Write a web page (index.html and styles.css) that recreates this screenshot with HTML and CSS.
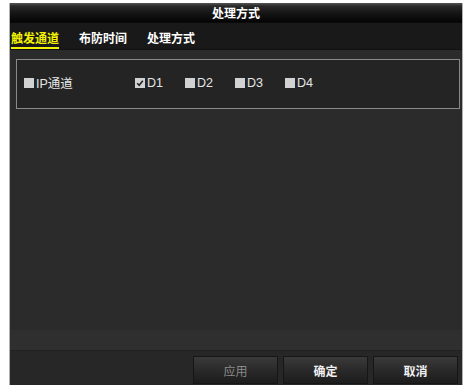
FILE: index.html
```html
<!DOCTYPE html>
<html>
<head>
<meta charset="utf-8">
<link rel="stylesheet" href="styles.css">
</head>
<body>
<div class="window">
  <div class="titlebar">处理方式</div>
  <div class="tabs">
    <div class="tab active">触发通道</div>
    <div class="tab">布防时间</div>
    <div class="tab">处理方式</div>
  </div>
  <div class="content">
    <div class="group">
      <label class="chk ip"><span class="box"></span>IP通道</label>
      <label class="chk d1"><span class="box checked"><svg viewBox="0 0 10 10" width="10" height="10"><path d="M2.2 5.2 L4.2 7.2 L7.8 2.8" fill="none" stroke="#222" stroke-width="1.6"/></svg></span>D1</label>
      <label class="chk"><span class="box"></span>D2</label>
      <label class="chk"><span class="box"></span>D3</label>
      <label class="chk"><span class="box"></span>D4</label>
    </div>
    <div class="spacer"></div>
    <div class="lower"></div>
  </div>
  <div class="buttons">
    <div class="btn disabled">应用</div>
    <div class="btn">确定</div>
    <div class="btn">取消</div>
  </div>
</div>
</body>
</html>
```
FILE: styles.css
```css
html, body {
  margin: 0;
  padding: 0;
  background: #ffffff;
}
body {
  font-family: "Noto Sans CJK SC", "Liberation Sans", sans-serif;
}
.window {
  margin: 3px 0 0 9px;
  width: 454px;
  height: 382px;
  box-sizing: border-box;
  border-left: 1px solid #b0b0b0;
  border-right: 1px solid #b0b0b0;
  display: flex;
  flex-direction: column;
  background: #2a2a2a;
}
.titlebar {
  height: 19px;
  line-height: 19px;
  text-align: center;
  color: #ffffff;
  font-size: 12px;
  font-weight: 700;
  background: linear-gradient(#555555 0px, #2a2a2a 3px, #151515 10px, #050505 19px);
}
.tabs {
  height: 28px;
  box-sizing: border-box;
  display: flex;
  gap: 20px;
  padding-left: 1px;
  background: #191919;
  border-top: 1px solid #0a0a0a;
  border-bottom: 1px solid #111;
}
.tab {
  color: #ffffff;
  font-size: 12px;
  font-weight: 700;
  line-height: 30px;
  height: 26px;
  box-sizing: border-box;
}
.tab.active {
  color: #f2f200;
  border-bottom: 2px solid #f2f200;
}
.content {
  flex: 1;
  display: flex;
  flex-direction: column;
  padding: 9px 2px 0 6px;
  background: #2b2b2b;
}
.group {
  height: 50px;
  box-sizing: border-box;
  border: 1px solid #8a8a8a;
  background: #242424;
  display: flex;
  align-items: center;
  padding-left: 7px;
  padding-bottom: 3px;
}
.chk {
  display: flex;
  align-items: center;
  color: #e6e6e6;
  font-family: "Liberation Sans", "Noto Sans CJK SC", sans-serif;
  font-size: 12.5px;
  width: 50px;
}
.chk.ip {
  width: 111px;
}
.box {
  width: 10px;
  height: 10px;
  background: #d2d2d2;
  margin-right: 2px;
  display: flex;
}
.spacer {
  flex: 1;
}
.lower {
  height: 20px;
  background: #2f2f2f;
  margin: 0 -2px 0 -6px;
}
.buttons {
  height: 35px;
  box-sizing: border-box;
  display: flex;
  justify-content: flex-end;
  gap: 5px;
  padding: 5px 4px 2px 0;
  background: #272727;
  border-top: 1px solid #222;
}
.btn {
  width: 85px;
  height: 28px;
  line-height: 28px;
  text-align: center;
  color: #f0f0f0;
  font-size: 12px;
  font-weight: 700;
  background: linear-gradient(#3a3a3a, #2a2a2a 50%, #1c1c1c);
  border: 1px solid #161616;
  box-sizing: border-box;
}
.btn.disabled {
  color: #8a8a8a;
  font-weight: 400;
}
```
